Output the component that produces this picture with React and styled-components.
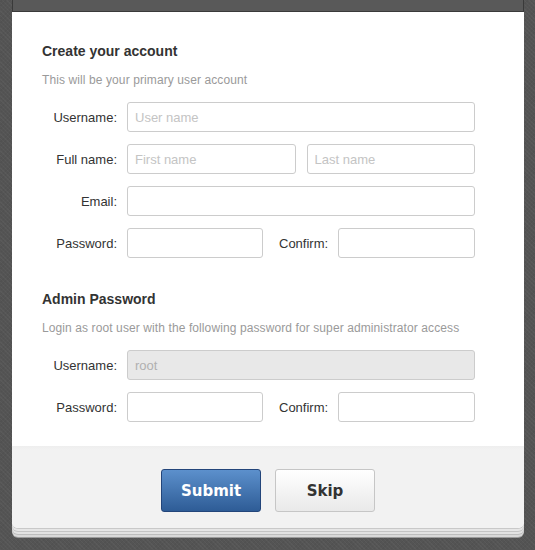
import React from 'react';
import styled, { createGlobalStyle } from 'styled-components';

const GlobalStyle = createGlobalStyle`
  html, body {
    margin: 0;
    padding: 0;
    min-height: 100vh;
    background-color: #545454;
    background-image: repeating-linear-gradient(45deg, rgba(255,255,255,0.035) 0 1px, transparent 1px 3px),
      repeating-linear-gradient(-45deg, rgba(0,0,0,0.04) 0 1px, transparent 1px 3px);
    font-family: "Liberation Sans", Arial, sans-serif;
  }
`;

const Page = styled.div`
  padding: 0 11px 0 12px;
`;

// edge of the window sitting above the dialog
const TopStrip = styled.div`
  height: 11px;
  background: #595959;
  border: 1px solid #3a3a3a;
  border-top: none;
`;

const Dialog = styled.div`
  background: #fff;
  border-radius: 0 0 6px 6px;
  box-shadow:
    0 1px 0 #c9c9c9,
    0 3px 0 #e6e6e6,
    0 4px 0 #c4c4c4,
    0 6px 0 #e2e2e2,
    0 7px 0 #bdbdbd,
    0 9px 0 #d8d8d8,
    0 10px 0 #9a9a9a;
`;

const Body = styled.form`
  padding: 29px 49px 24px 30px;
`;

const Section = styled.section`
  & + & {
    margin-top: 31px;
  }
`;

const Title = styled.h3`
  margin: 0 0 11px;
  font-size: 14px;
  line-height: 20px;
  font-weight: bold;
  color: #333;
`;

const Hint = styled.p`
  margin: 0 0 14px;
  font-size: 12px;
  line-height: 16px;
  letter-spacing: 0.1px;
  color: #9a9a9a;
`;

const Fields = styled.div`
  display: grid;
  grid-template-columns: 75px minmax(0, 1fr);
  column-gap: 10px;
  row-gap: 12px;
  align-items: center;
`;

const Label = styled.label`
  font-size: 13px;
  color: #333;
  text-align: right;
  white-space: nowrap;
  margin: ${p => p.$inline ? '0 10px 0 16px' : '0'};
`;

const Line = styled.div`
  display: flex;
  align-items: center;
  gap: ${p => p.$gap || 0}px;
  min-width: 0;
`;

const Input = styled.input`
  box-sizing: border-box;
  height: 30px;
  width: ${p => p.$width ? `${p.$width}px` : '100%'};
  flex: ${p => p.$width ? 'none' : '1 1 0'};
  min-width: 0;
  margin: 0;
  padding: 0 7px;
  border: 1px solid #cccccc;
  border-radius: 3px;
  background: #fff;
  font-family: "Liberation Sans", Arial, sans-serif;
  font-size: 13px;
  color: #333;
  outline: none;

  &::placeholder {
    color: #c4c4c4;
  }

  &:disabled {
    background: #e8e8e8;
    color: #b0b0b0;
  }
`;

const Footer = styled.div`
  display: flex;
  justify-content: center;
  gap: 14px;
  padding: 23px 0 16px;
  background: linear-gradient(#eeeeee, #f2f2f2 4px);
  border-radius: 0 0 6px 6px;
`;

const Button = styled.button`
  box-sizing: border-box;
  width: 100px;
  height: 43px;
  border-radius: 3px;
  font-family: "DejaVu Sans", Verdana, sans-serif;
  font-size: 15px;
  font-weight: bold;
  cursor: pointer;
  border: 1px solid ${p => p.$primary ? '#23457a' : '#c6c6c6'};
  color: ${p => p.$primary ? '#fff' : '#333'};
  background: ${p => p.$primary
    ? 'linear-gradient(#5c90cc, #2e5c96)'
    : 'linear-gradient(#ffffff, #e9e9e9)'};
`;

function PasswordLine() {
  return (
    <Line>
      <Input type="password" $width={136} />
      <Label $inline>Confirm:</Label>
      <Input type="password" />
    </Line>
  );
}

export default function App() {
  return (
    <>
      <GlobalStyle />
      <Page>
        <TopStrip />
        <Dialog>
          <Body onSubmit={e => e.preventDefault()}>
            <Section>
              <Title>Create your account</Title>
              <Hint>This will be your primary user account</Hint>
              <Fields>
                <Label>Username:</Label>
                <Input placeholder="User name" />
                <Label>Full name:</Label>
                <Line $gap={11}>
                  <Input placeholder="First name" />
                  <Input placeholder="Last name" />
                </Line>
                <Label>Email:</Label>
                <Input type="email" />
                <Label>Password:</Label>
                <PasswordLine />
              </Fields>
            </Section>
            <Section>
              <Title>Admin Password</Title>
              <Hint>Login as root user with the following password for super administrator access</Hint>
              <Fields>
                <Label>Username:</Label>
                <Input value="root" disabled readOnly />
                <Label>Password:</Label>
                <PasswordLine />
              </Fields>
            </Section>
          </Body>
          <Footer>
            <Button $primary>Submit</Button>
            <Button>Skip</Button>
          </Footer>
        </Dialog>
      </Page>
    </>
  );
}
